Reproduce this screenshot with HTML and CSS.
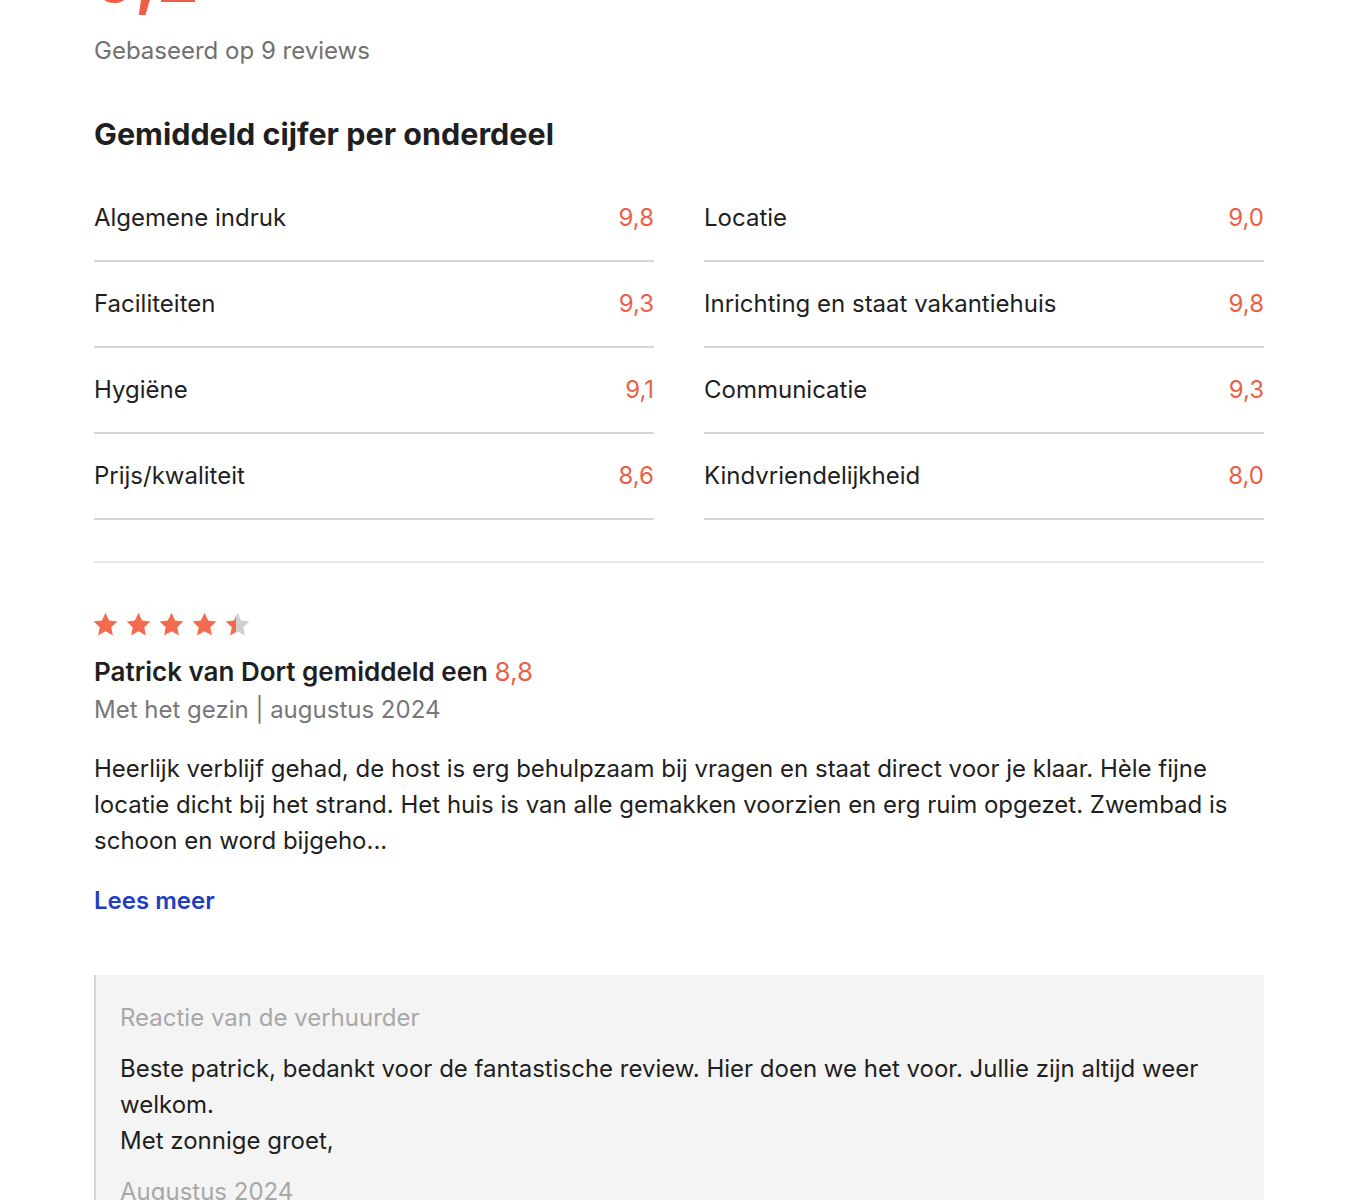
FILE: index.html
```html
<!DOCTYPE html>
<html lang="nl">
<head>
<meta charset="utf-8">
<link rel="stylesheet" href="styles.css">
</head>
<body>
<main class="page">
  <section class="summary">
    <div class="big-score">9,2</div>
    <p class="based">Gebaseerd op 9 reviews</p>
  </section>

  <h2 class="section-title">Gemiddeld cijfer per onderdeel</h2>

  <div class="scores">
    <div class="score-row"><span>Algemene indruk</span><span class="val">9,8</span></div>
    <div class="score-row"><span>Locatie</span><span class="val">9,0</span></div>
    <div class="score-row"><span>Faciliteiten</span><span class="val">9,3</span></div>
    <div class="score-row"><span>Inrichting en staat vakantiehuis</span><span class="val">9,8</span></div>
    <div class="score-row"><span>Hygiëne</span><span class="val">9,1</span></div>
    <div class="score-row"><span>Communicatie</span><span class="val">9,3</span></div>
    <div class="score-row"><span>Prijs/kwaliteit</span><span class="val">8,6</span></div>
    <div class="score-row"><span>Kindvriendelijkheid</span><span class="val">8,0</span></div>
  </div>

  <article class="review">
    <div class="stars">
      <svg class="star" viewBox="0 0 24 24"><path d="M12 1.6l3.2 6.9 7.4.8-5.5 5.1 1.5 7.4L12 18l-6.6 3.8 1.5-7.4-5.5-5.1 7.4-.8z" fill="#f26b4f"/></svg>
      <svg class="star" viewBox="0 0 24 24"><path d="M12 1.6l3.2 6.9 7.4.8-5.5 5.1 1.5 7.4L12 18l-6.6 3.8 1.5-7.4-5.5-5.1 7.4-.8z" fill="#f26b4f"/></svg>
      <svg class="star" viewBox="0 0 24 24"><path d="M12 1.6l3.2 6.9 7.4.8-5.5 5.1 1.5 7.4L12 18l-6.6 3.8 1.5-7.4-5.5-5.1 7.4-.8z" fill="#f26b4f"/></svg>
      <svg class="star" viewBox="0 0 24 24"><path d="M12 1.6l3.2 6.9 7.4.8-5.5 5.1 1.5 7.4L12 18l-6.6 3.8 1.5-7.4-5.5-5.1 7.4-.8z" fill="#f26b4f"/></svg>
      <svg class="star" viewBox="0 0 24 24"><defs><linearGradient id="half"><stop offset="45%" stop-color="#f26b4f"/><stop offset="45%" stop-color="#cfcfcf"/></linearGradient></defs><path d="M12 1.6l3.2 6.9 7.4.8-5.5 5.1 1.5 7.4L12 18l-6.6 3.8 1.5-7.4-5.5-5.1 7.4-.8z" fill="url(#half)"/></svg>
    </div>
    <h3 class="reviewer">Patrick van Dort gemiddeld een <span class="val">8,8</span></h3>
    <p class="meta">Met het gezin | augustus 2024</p>
    <p class="body">Heerlijk verblijf gehad, de host is erg behulpzaam bij vragen en staat direct voor je klaar. Hèle fijne locatie dicht bij het strand. Het huis is van alle gemakken voorzien en erg ruim opgezet. Zwembad is schoon en word bijgeho...</p>
    <a class="more" href="#">Lees meer</a>

    <div class="reply">
      <p class="reply-title">Reactie van de verhuurder</p>
      <p class="reply-body">Beste patrick, bedankt voor de fantastische review. Hier doen we het voor. Jullie zijn altijd weer welkom.<br>Met zonnige groet,</p>
      <p class="reply-date">Augustus 2024</p>
    </div>
  </article>
</main>
</body>
</html>
```
FILE: styles.css
```css
* { box-sizing: border-box; }
html, body { margin: 0; padding: 0; background: #fff; }
body {
  font-family: Inter, "Noto Sans", sans-serif;
  color: #1f1f22;
  overflow: hidden;
}
.page {
  width: 1170px;
  margin: 0 0 0 94px;
}
.summary { margin-top: -54px; }
.big-score {
  font-size: 66px;
  font-weight: 700;
  color: #ee5d45;
  line-height: 64px;
}
.based {
  margin: 25px 0 0;
  font-size: 24px;
  line-height: 32px;
  color: #707070;
}
.section-title {
  margin: 49px 0 0;
  font-size: 30.5px;
  line-height: 36px;
  font-weight: 700;
  color: #1f1f22;
}
.scores {
  display: grid;
  grid-template-columns: 1fr 1fr;
  column-gap: 50px;
  margin-top: 24px;
  padding-bottom: 41px;
  border-bottom: 2px solid #e6e6e6;
}
.score-row {
  display: flex;
  justify-content: space-between;
  align-items: center;
  padding: 24px 0;
  line-height: 36px;
  font-size: 24px;
  border-bottom: 2px solid #d6d6d6;
}
.val { color: #ec5f47; }
.review { padding-top: 48px; }
.stars { display: flex; gap: 6px; height: 26px; margin-left: -2px; }
.star { width: 27px; height: 27px; display: block; }
.reviewer {
  margin: 18px 0 0;
  font-size: 26px;
  line-height: 34px;
  font-weight: 600;
}
.reviewer .val { font-weight: 400; }
.meta {
  margin: 4px 0 0;
  font-size: 24px;
  line-height: 34px;
  color: #777;
}
.body {
  margin: 24px 0 0;
  font-size: 24px;
  line-height: 36px;
  color: #1f1f22;
  max-width: 1140px;
}
.more {
  display: inline-block;
  margin-top: 26px;
  font-size: 24px;
  line-height: 32px;
  font-weight: 600;
  color: #1f3fbf;
  text-decoration: none;
}
.reply {
  margin-top: 58px;
  background: #f4f4f4;
  border-left: 2px solid #d4d4d4;
  padding: 26px 24px 20px 24px;
}
.reply-title {
  margin: 0;
  font-size: 24px;
  line-height: 34px;
  color: #a8a8a8;
}
.reply-body {
  margin: 16px 0 0;
  font-size: 24px;
  line-height: 36px;
}
.reply-date {
  margin: 16px 0 0;
  font-size: 24px;
  line-height: 34px;
  color: #a8a8a8;
}
```
